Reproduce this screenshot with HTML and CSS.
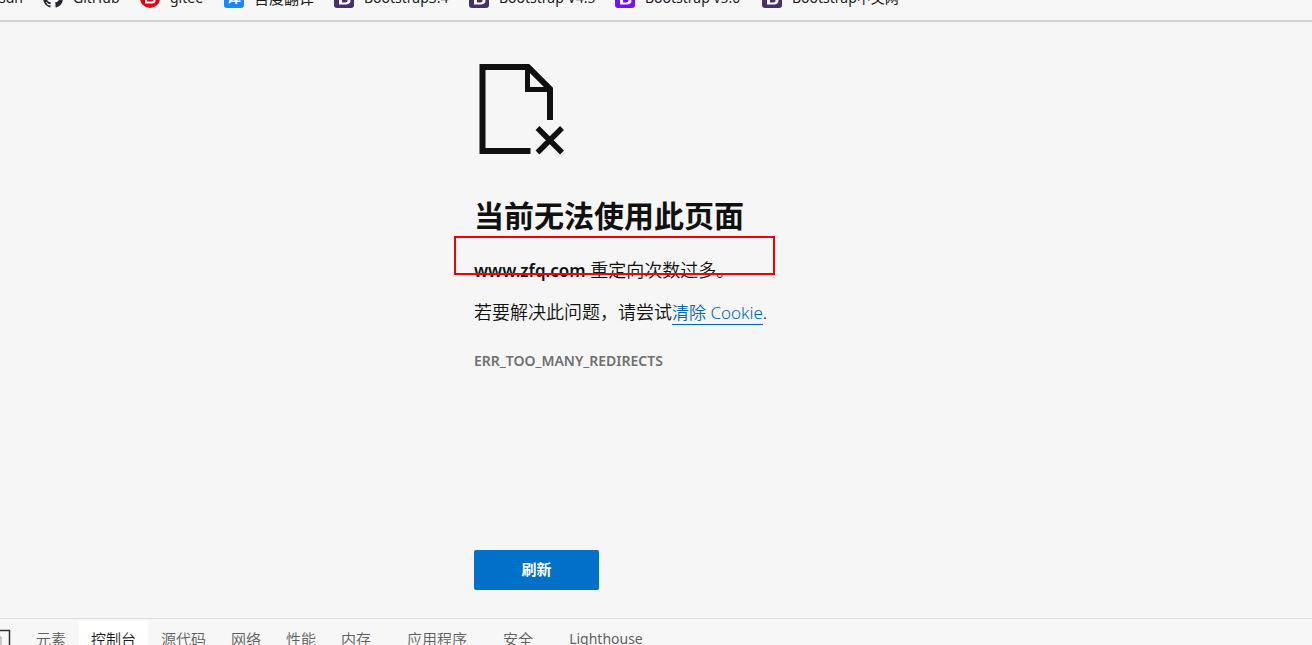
FILE: index.html
```html
<!DOCTYPE html>
<html lang="zh-CN">
<head>
<meta charset="utf-8">
<title>www.zfq.com</title>
<link rel="stylesheet" href="styles.css">
</head>
<body>
<svg class="defs" aria-hidden="true">
  <symbol id="bootstrap" viewBox="0 0 20 20">
    <rect width="20" height="20" rx="3" fill="currentColor"/>
    <path fill="#fff" fill-rule="evenodd" d="M5 4h6c3 0 5 1 5 3.500 0 1.500-.8 2.300-2 2.700 1.600.3 2.500 1.500 2.500 2.800 0 2.300-2 3.500-5 3.500H5zM8 6v3.200h2.500c1.500 0 2.400-.5 2.400-1.600S12 6 10.500 6zM8 11v3.500h3c1.500 0 2.500-.6 2.500-1.700s-1-1.800-2.500-1.800z"/>
  </symbol>
</svg>
<nav class="bookmarks" aria-label="书签">
  <a class="bookmark" href="#">csdn</a>
  <a class="bookmark" href="#">
    <svg class="icon" viewBox="0 0 16 16" fill="#24292f"><path d="M8 0C3.580 0 0 3.580 0 8c0 3.540 2.290 6.530 5.470 7.590.4.070.55-.17.55-.38 0-.19-.01-.82-.01-1.490-2.010.37-2.530-.49-2.690-.94-.09-.23-.48-.94-.82-1.130-.28-.15-.68-.52-.01-.53.63-.01 1.080.58 1.230.82.72 1.210 1.870.87 2.330.66.07-.52.28-.87.51-1.070-1.780-.2-3.640-.89-3.640-3.950 0-.87.31-1.590.82-2.150-.08-.2-.36-1.020.08-2.120 0 0 .67-.21 2.200.82a7.600 7.600 0 0 1 4 0c1.530-1.040 2.200-.82 2.200-.82.44 1.100.16 1.920.08 2.120.51.56.82 1.270.82 2.150 0 3.070-1.870 3.750-3.650 3.950.29.25.54.73.54 1.480 0 1.070-.01 1.930-.01 2.200 0 .21.15.46.55.38A8.010 8.010 0 0 0 16 8c0-4.420-3.580-8-8-8z"/></svg>
    GitHub</a>
  <a class="bookmark" href="#">
    <svg class="icon" viewBox="0 0 20 20"><circle cx="10" cy="10" r="10" fill="#e60012"/><path d="M15 5H9.500A3.500 3.500 0 0 0 6 8.500V14.500H12A2.500 2.500 0 0 0 14.500 12V10H9" fill="none" stroke="#fff" stroke-width="2"/></svg>
    gitee</a>
  <a class="bookmark" href="#"><span class="icon translate">译</span>百度翻译</a>
  <a class="bookmark" href="#"><svg class="icon dark"><use href="#bootstrap"/></svg>Bootstrap3.4</a>
  <a class="bookmark" href="#"><svg class="icon dark"><use href="#bootstrap"/></svg>Bootstrap V4.5</a>
  <a class="bookmark" href="#"><svg class="icon violet"><use href="#bootstrap"/></svg>Bootstrap v5.0</a>
  <a class="bookmark" href="#"><svg class="icon dark"><use href="#bootstrap"/></svg>Bootstrap中文网</a>
</nav>
<main class="page">
  <section class="error">
    <svg class="file-icon" viewBox="0 0 96 96" fill="none" stroke="#101010" aria-hidden="true">
      <path d="M56.500 91H8.500V7H54L76 29V60" stroke-width="6"/>
      <path d="M53.500 5V29.500H77" stroke-width="5"/>
      <path d="M63.500 68L88 92.500M88 68L63.500 92.500" stroke-width="5.500"/>
    </svg>
    <h1 class="title">当前无法使用此页面</h1>
    <p class="text reason"><strong>www.zfq.com</strong> 重定向次数过多。</p>
    <p class="text">若要解决此问题，请尝试<a class="link" href="#">清除 Cookie</a>.</p>
    <p class="code">ERR_TOO_MANY_REDIRECTS</p>
    <button class="refresh" type="button">刷新</button>
  </section>
</main>
<nav class="devtools" aria-label="开发人员工具">
  <svg class="device" viewBox="0 0 12 20" fill="none" stroke="#333" aria-hidden="true"><path d="M0 1.500H9.500V20" stroke-width="1.500"/><path d="M0 8H1V20" stroke="#999"/></svg>
  <button class="tab" type="button">元素</button>
  <button class="tab active" type="button">控制台</button>
  <button class="tab" type="button">源代码</button>
  <button class="tab" type="button">网络</button>
  <button class="tab" type="button">性能</button>
  <button class="tab" type="button">内存</button>
  <button class="tab spaced" type="button">应用程序</button>
  <button class="tab" type="button">安全</button>
  <button class="tab lighthouse" type="button">Lighthouse</button>
</nav>
</body>
</html>
```
FILE: styles.css
```css
*,
*::after { box-sizing: border-box; }

body {
  display: flex;
  flex-direction: column;
  height: 100vh;
  margin: 0;
  overflow: hidden;
  background: #f6f6f6;
  color: #101010;
  font-family: "Noto Sans", "Noto Sans CJK SC", sans-serif;
}

.defs { display: none; }

.bookmarks {
  display: grid;
  grid-template-columns: 23px 77px 64px 90px 115px 126px 127px auto;
  justify-content: start;
  align-content: end;
  gap: 20px;
  flex: none;
  height: 22px;
  padding-bottom: 12px;
  overflow: hidden;
  border-bottom: 2px solid #d2d2d2;
  background: #f7f7f7;
}

.bookmark {
  display: flex;
  align-items: center;
  justify-content: flex-start;
  gap: 10px;
  height: 20px;
  color: #1a1a1a;
  font-size: 14px;
  line-height: 20px;
  white-space: nowrap;
  text-decoration: none;
}

.bookmark:first-child { justify-content: flex-end; }

.bookmark:nth-child(4) { font-size: 15px; }

.icon {
  flex: none;
  width: 20px;
  height: 20px;
}

.translate {
  border-radius: 3px;
  background: #1689fb;
  color: #fff;
  font-size: 14px;
  font-weight: 700;
  line-height: 18px;
  text-align: center;
}

.dark { color: #47306c; }
.violet { color: #7411f7; }

.page {
  display: flex;
  flex: 1;
  justify-content: center;
  min-height: 0;
}

.error {
  display: flex;
  flex-direction: column;
  align-items: flex-start;
  width: 364px;
  padding-top: 38px;
}

.file-icon {
  flex: none;
  width: 96px;
  height: 96px;
}

.title {
  margin: 40px 0 0;
  font-size: 30px;
  line-height: 40px;
}

.text {
  margin: 0 0 16px;
  font-size: 18px;
  line-height: 26px;
  font-weight: 350;
  white-space: nowrap;
}

.reason {
  position: relative;
  margin-top: 21px;
}

.reason strong {
  font-size: 17px;
  font-weight: 600;
  line-height: 20px;
}

.reason::after {
  content: "";
  position: absolute;
  top: -21px;
  left: -20px;
  width: 321px;
  height: 39px;
  border: 2px solid #f00000;
}

.link {
  border-bottom: 1px solid #0067b8;
  color: #0067b8;
  font-size: 17px;
  line-height: 20px;
  text-decoration: none;
}

.code {
  margin: 10px 0 0;
  color: #707070;
  font-size: 14px;
  font-weight: 600;
  line-height: 20px;
}

.refresh {
  width: 125px;
  height: 40px;
  margin-top: 179px;
  padding: 0 0 4px;
  border: 0;
  border-radius: 2px;
  background: #0070c9;
  color: #fff;
  font-family: inherit;
  font-size: 15px;
  font-weight: 700;
}

.devtools {
  display: flex;
  gap: 1px;
  flex: none;
  height: 27px;
  padding-top: 2px;
  overflow: hidden;
  border-top: 1px solid #dedede;
  background: #f7f7f7;
}

.device {
  flex: none;
  width: 12px;
  height: 20px;
  margin: 8px 11px 0 0;
}

.tab {
  flex: none;
  height: 36px;
  padding: 0 12px;
  border: 0;
  border-radius: 2px 2px 0 0;
  background: none;
  color: #5f5f5f;
  font-family: inherit;
  font-size: 15px;
  font-weight: 350;
  line-height: 36px;
}

.active {
  background: #fff;
  color: #1a1a1a;
}

.spaced { margin: 0 11px; }
.lighthouse { margin-left: 11px; font-size: 14px; font-weight: 400; }
```
